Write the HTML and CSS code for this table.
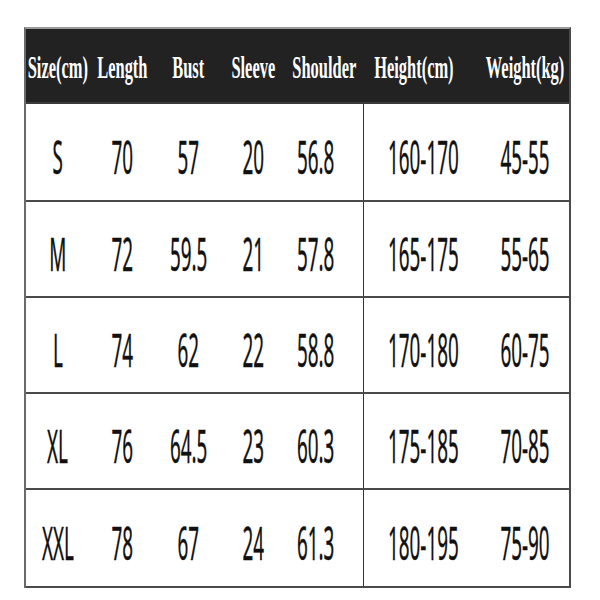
FILE: index.html
```html
<!DOCTYPE html>
<html>
<head>
<meta charset="utf-8">
<link rel="stylesheet" href="styles.css">
</head>
<body>
<div class="chart">
  <div class="row head">
    <div class="cell"><span class="ht">Size(cm)</span></div>
    <div class="cell"><span class="ht">Length</span></div>
    <div class="cell"><span class="ht">Bust</span></div>
    <div class="cell"><span class="ht">Sleeve</span></div>
    <div class="cell"><span class="ht">Shoulder</span></div>
    <div class="cell"><span class="ht">Height(cm)</span></div>
    <div class="cell"><span class="ht">Weight(kg)</span></div>
  </div>
  <div class="row body first">
    <div class="cell"><span class="bt">S</span></div>
    <div class="cell"><span class="bt">70</span></div>
    <div class="cell"><span class="bt">57</span></div>
    <div class="cell"><span class="bt">20</span></div>
    <div class="cell"><span class="bt">56.8</span></div>
    <div class="cell split"><span class="bt">160-170</span></div>
    <div class="cell"><span class="bt">45-55</span></div>
  </div>
  <div class="row body">
    <div class="cell"><span class="bt">M</span></div>
    <div class="cell"><span class="bt">72</span></div>
    <div class="cell"><span class="bt">59.5</span></div>
    <div class="cell"><span class="bt">21</span></div>
    <div class="cell"><span class="bt">57.8</span></div>
    <div class="cell split"><span class="bt">165-175</span></div>
    <div class="cell"><span class="bt">55-65</span></div>
  </div>
  <div class="row body">
    <div class="cell"><span class="bt">L</span></div>
    <div class="cell"><span class="bt">74</span></div>
    <div class="cell"><span class="bt">62</span></div>
    <div class="cell"><span class="bt">22</span></div>
    <div class="cell"><span class="bt">58.8</span></div>
    <div class="cell split"><span class="bt">170-180</span></div>
    <div class="cell"><span class="bt">60-75</span></div>
  </div>
  <div class="row body">
    <div class="cell"><span class="bt">XL</span></div>
    <div class="cell"><span class="bt">76</span></div>
    <div class="cell"><span class="bt">64.5</span></div>
    <div class="cell"><span class="bt">23</span></div>
    <div class="cell"><span class="bt">60.3</span></div>
    <div class="cell split"><span class="bt">175-185</span></div>
    <div class="cell"><span class="bt">70-85</span></div>
  </div>
  <div class="row body last">
    <div class="cell"><span class="bt">XXL</span></div>
    <div class="cell"><span class="bt">78</span></div>
    <div class="cell"><span class="bt">67</span></div>
    <div class="cell"><span class="bt">24</span></div>
    <div class="cell"><span class="bt">61.3</span></div>
    <div class="cell split"><span class="bt">180-195</span></div>
    <div class="cell"><span class="bt">75-90</span></div>
  </div>
</div>
</body>
</html>
```

FILE: styles.css
```css
html, body {
  margin: 0;
  padding: 0;
  background: #ffffff;
}

.chart {
  margin: 27px 0 0 24px;
  width: 547px;
  box-sizing: border-box;
  border-left: 2px solid #6a6a6a;
  border-right: 2px solid #4a4a4a;
  border-top: 2px solid #9a9a9a;
}

.row {
  display: grid;
  grid-template-columns: 64px 65px 67px 63px 78px 119px 87px;
  border-bottom: 2px solid #4a4a4a;
  box-sizing: border-box;
}

.head {
  background: #222222;
  height: 75px;
  border-bottom: 2px solid #3a3a3a;
}

.body {
  height: 96px;
}

.body.first {
  height: 98px;
}

.body.last {
  height: 98px;
}

.cell {
  display: flex;
  align-items: center;
  justify-content: center;
  overflow: visible;
  white-space: nowrap;
}

.body .cell:nth-child(5) {
  padding-right: 16px;
}

.head .cell:nth-child(6) {
  padding-right: 18px;
}

.split {
  border-left: 1px solid #333333;
}

.ht {
  display: inline-block;
  color: #ffffff;
  font-family: "Liberation Serif", "Times New Roman", serif;
  font-weight: bold;
  font-size: 31px;
  transform: scaleX(0.53);
  margin-top: 4px;
}

.bt {
  display: inline-block;
  color: #111111;
  font-family: "Noto Sans", "DejaVu Sans", sans-serif;
  font-size: 46px;
  transform: scaleX(0.41);
  margin-top: 8px;
  -webkit-text-stroke: 0.4px #111111;
}
```
